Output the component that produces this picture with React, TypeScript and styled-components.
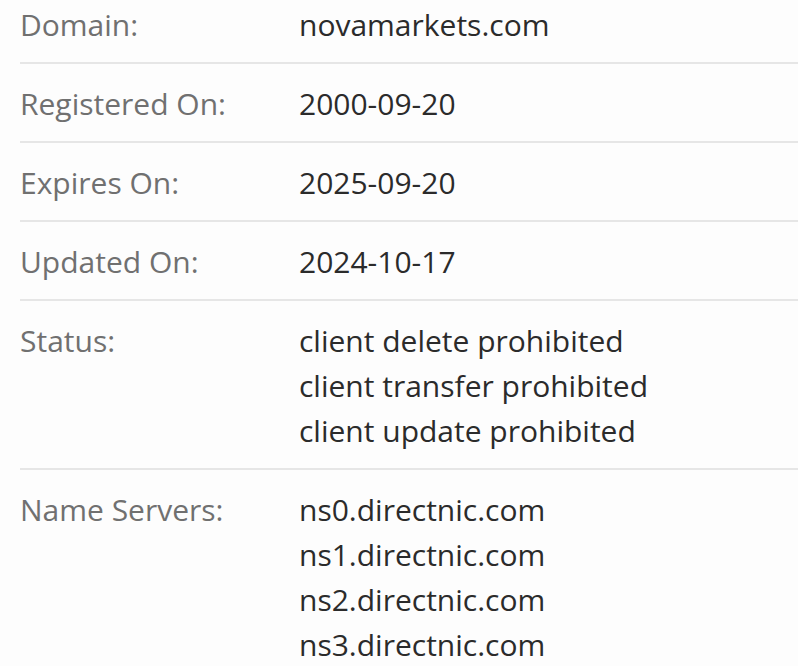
import React from "react";
import styled, { createGlobalStyle } from "styled-components";

const Global = createGlobalStyle`
  html, body {
    margin: 0;
    padding: 0;
    background: #fdfdfd;
    overflow: hidden;
  }
  body {
    font-family: "Open Sans", "Liberation Sans", sans-serif;
  }
`;

const Table = styled.div`
  display: flex;
  flex-direction: column;
  padding-left: 20px;
  margin-top: -15px;
`;

const Row = styled.div<{ $last?: boolean }>`
  display: grid;
  grid-template-columns: 279px 1fr;
  padding: 17px 0 15px 0;
  border-bottom: ${(p) => (p.$last ? "none" : "2px solid #e6e6e6")};
  font-size: 30px;
  line-height: 45px;
`;

const Label = styled.div`
  color: #707070;
`;

const Value = styled.div`
  color: #2b2b2b;
  display: flex;
  flex-direction: column;
`;

const rows: { label: string; values: string[] }[] = [
  { label: "Domain:", values: ["novamarkets.com"] },
  { label: "Registered On:", values: ["2000-09-20"] },
  { label: "Expires On:", values: ["2025-09-20"] },
  { label: "Updated On:", values: ["2024-10-17"] },
  {
    label: "Status:",
    values: [
      "client delete prohibited",
      "client transfer prohibited",
      "client update prohibited",
    ],
  },
  {
    label: "Name Servers:",
    values: [
      "ns0.directnic.com",
      "ns1.directnic.com",
      "ns2.directnic.com",
      "ns3.directnic.com",
    ],
  },
];

export default function App() {
  return (
    <>
      <Global />
      <Table>
        {rows.map((r, i) => (
          <Row key={r.label} $last={i === rows.length - 1}>
            <Label>{r.label}</Label>
            <Value>
              {r.values.map((v) => (
                <span key={v}>{v}</span>
              ))}
            </Value>
          </Row>
        ))}
      </Table>
    </>
  );
}
